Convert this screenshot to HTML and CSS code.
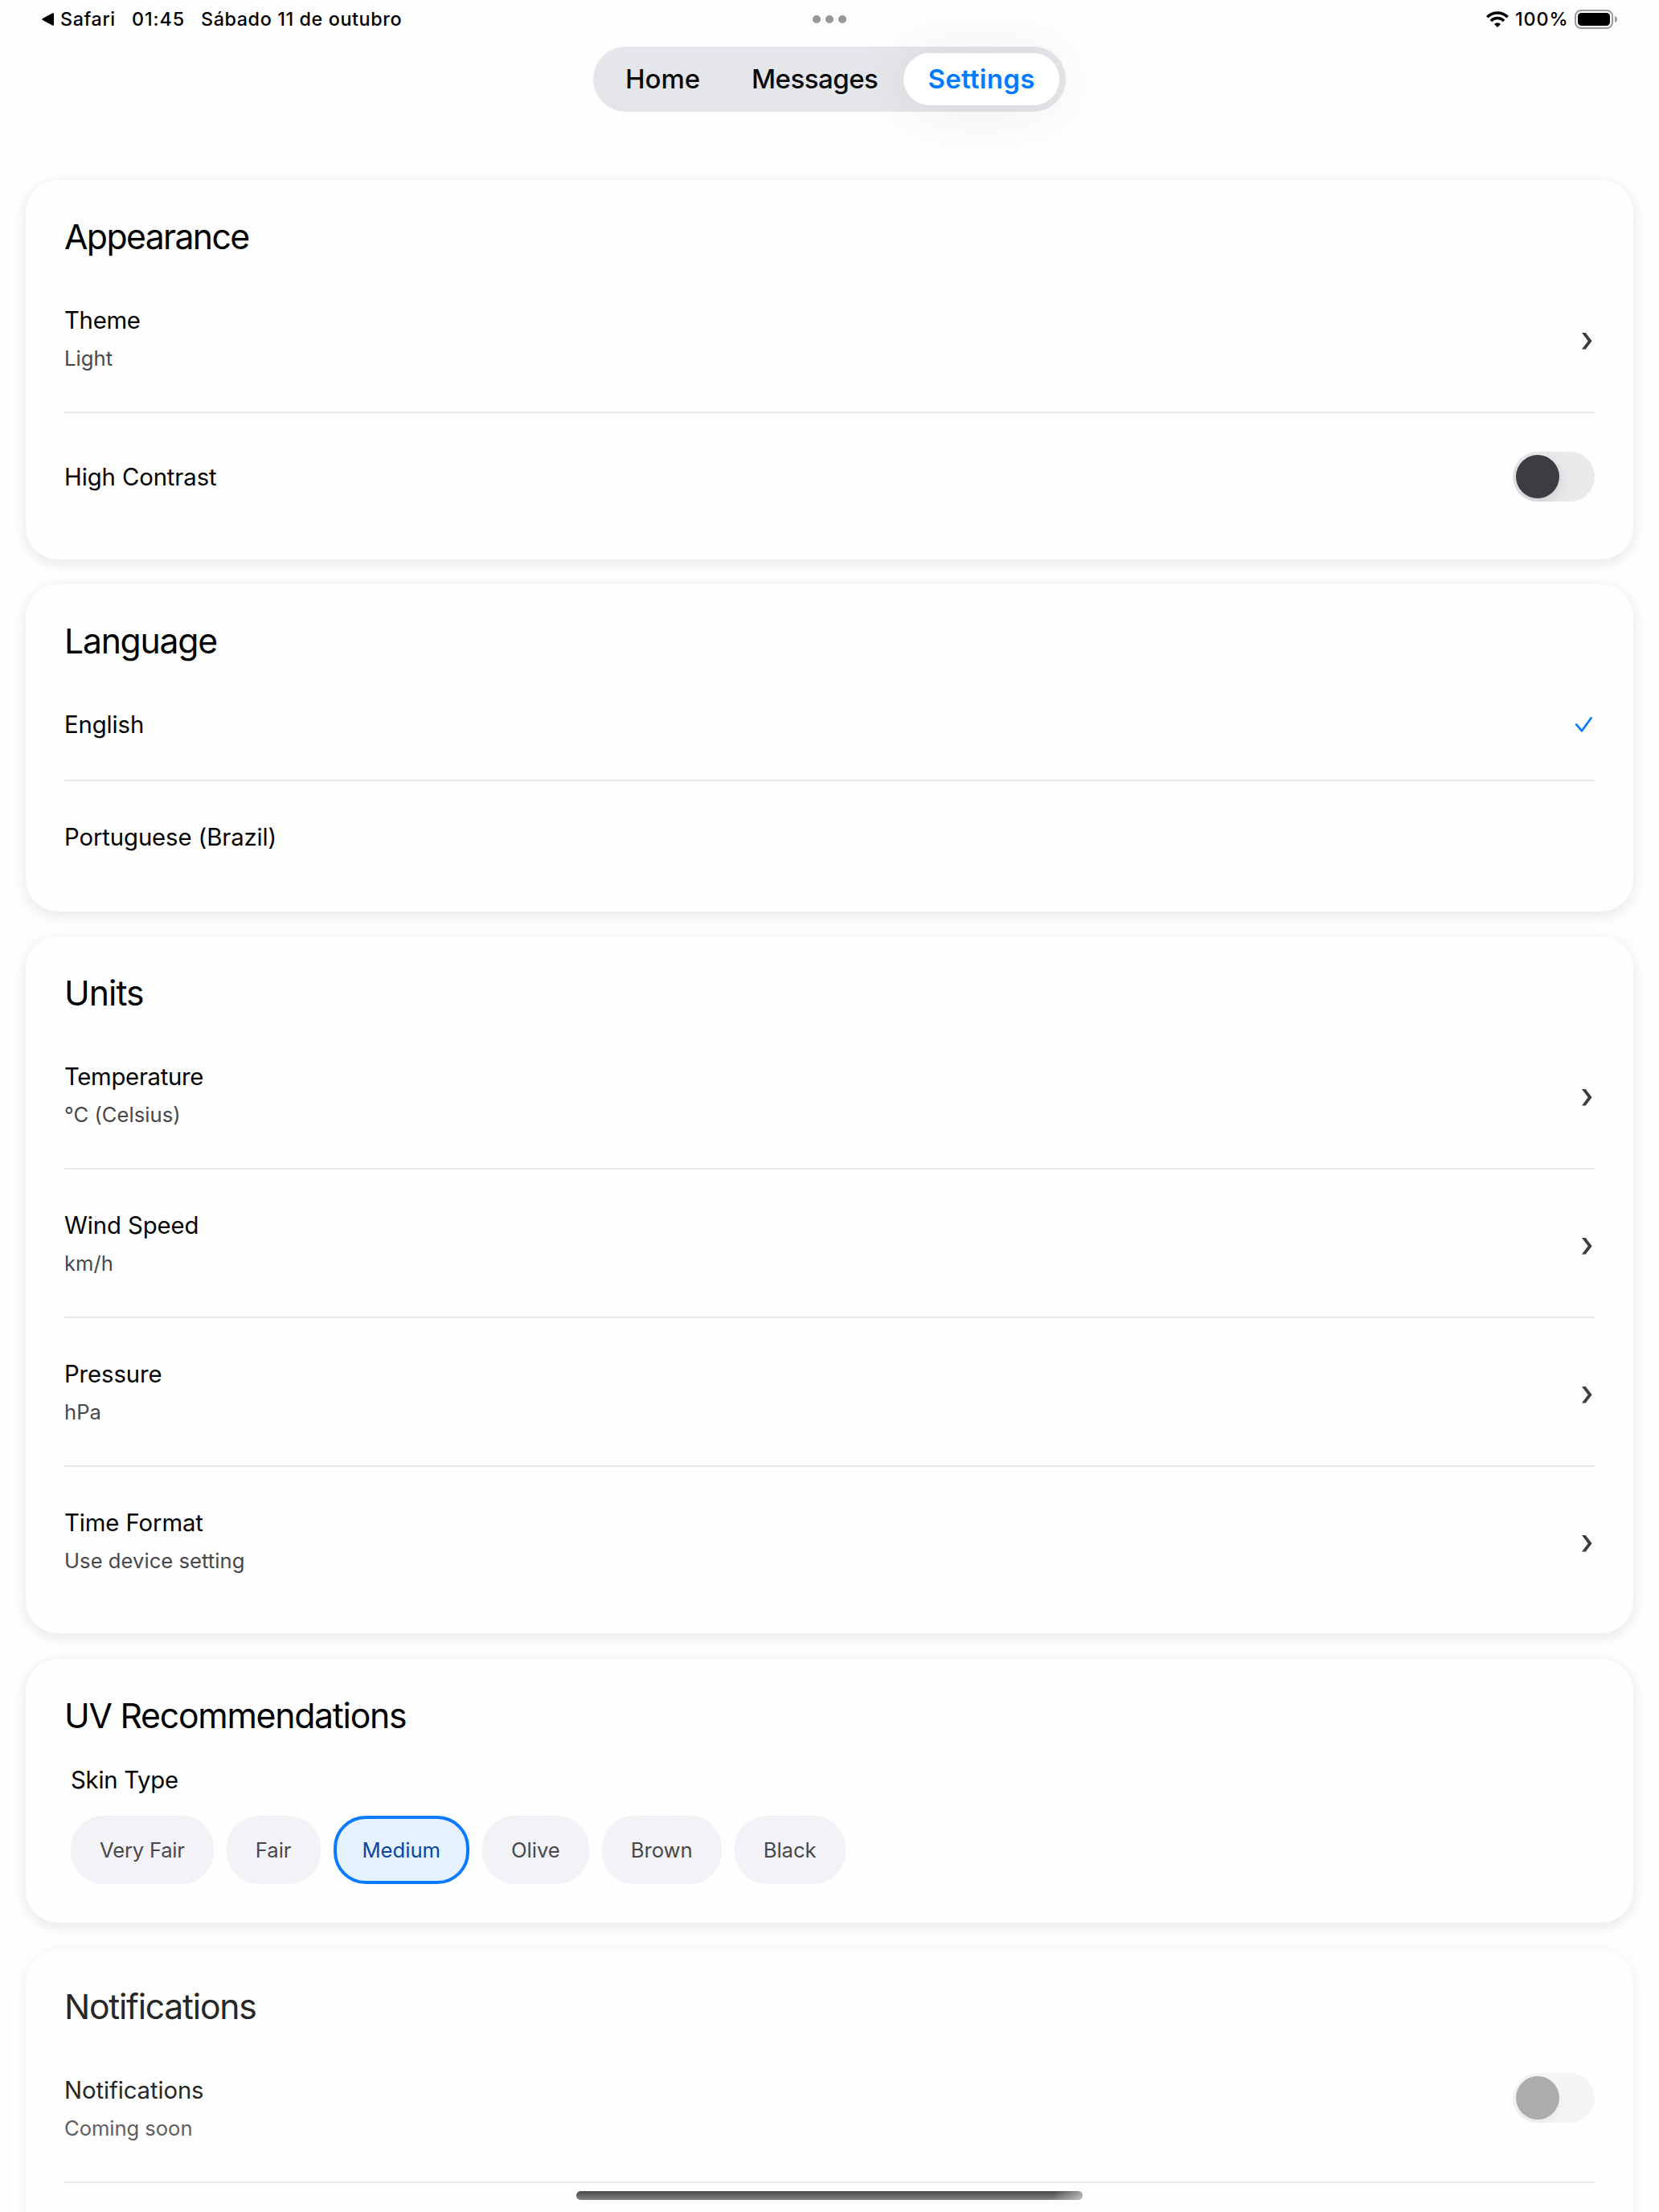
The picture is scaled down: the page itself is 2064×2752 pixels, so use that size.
FILE: index.html
```html
<!DOCTYPE html>
<html lang="en">
<head>
<meta charset="utf-8">
<title>Settings</title>
<link rel="stylesheet" href="styles.css">
</head>
<body>
<header class="top">
  <div class="status">
    <div class="status-left">
      <svg class="back" width="15" height="16" viewBox="0 0 15 16"><path d="M1 7.1 13 .4Q15 -.3 15 1.600V14.400Q15 16.300 13 15.600L1 8.900Q-.5 8 1 7.100Z"/></svg>
      <span class="app">Safari</span>
      <span class="time">01:45</span>
      <span class="date">Sábado 11 de outubro</span>
    </div>
    <div class="dots"><i></i><i></i><i></i></div>
    <div class="status-right">
      <svg class="wifi" width="28" height="20" viewBox="0 0 28 20">
        <g fill="none" stroke="#000" stroke-width="3.500">
          <path d="M1.300 7.200A18 18 0 0 1 26.700 7.200"/>
          <path d="M5.900 11.900A11.500 11.500 0 0 1 22.100 11.900"/>
        </g>
        <path d="M14 20 10 15.900A5.700 5.700 0 0 1 18 15.900Z"/>
      </svg>
      <span class="pct">100%</span>
      <svg class="battery" width="54" height="24" viewBox="0 0 54 24">
        <rect x="1" y="1" width="46" height="22" rx="7" fill="none" stroke="#9a9a9a" stroke-width="2"/>
        <rect x="4" y="4" width="40" height="16" rx="4.500"/>
        <path d="M50 8Q53 9 53 12T50 16Z" fill="#9a9a9a"/>
      </svg>
    </div>
  </div>
  <nav class="tabs">
    <a class="tab home">Home</a>
    <a class="tab messages">Messages</a>
    <a class="tab active">Settings</a>
  </nav>
</header>

<main class="content">
  <section class="card">
    <h2 class="narrow">Appearance</h2>
    <div class="row">
      <div><div class="label tight">Theme</div><div class="sub">Light</div></div>
      <svg class="chevron" viewBox="0 0 13 21"><path d="M0 0H4.700L12.600 10.300 4.700 20.600H0L7.700 10.300Z"/></svg>
    </div>
    <div class="row">
      <div class="label">High Contrast</div>
      <div class="toggle"><i></i></div>
    </div>
  </section>

  <section class="card">
    <h2>Language</h2>
    <div class="row">
      <div class="label">English</div>
      <svg class="check" viewBox="0 0 21 21"><path d="M1.200 9.300 8 17.300 19.600 1.300"/></svg>
    </div>
    <div class="row">
      <div class="label">Portuguese (Brazil)</div>
    </div>
  </section>

  <section class="card">
    <h2 class="loose">Units</h2>
    <div class="row">
      <div><div class="label tight">Temperature</div><div class="sub">°C (Celsius)</div></div>
      <svg class="chevron" viewBox="0 0 13 21"><path d="M0 0H4.700L12.600 10.300 4.700 20.600H0L7.700 10.300Z"/></svg>
    </div>
    <div class="row">
      <div><div class="label">Wind Speed</div><div class="sub">km/h</div></div>
      <svg class="chevron" viewBox="0 0 13 21"><path d="M0 0H4.700L12.600 10.300 4.700 20.600H0L7.700 10.300Z"/></svg>
    </div>
    <div class="row">
      <div><div class="label">Pressure</div><div class="sub">hPa</div></div>
      <svg class="chevron" viewBox="0 0 13 21"><path d="M0 0H4.700L12.600 10.300 4.700 20.600H0L7.700 10.300Z"/></svg>
    </div>
    <div class="row">
      <div><div class="label">Time Format</div><div class="sub">Use device setting</div></div>
      <svg class="chevron" viewBox="0 0 13 21"><path d="M0 0H4.700L12.600 10.300 4.700 20.600H0L7.700 10.300Z"/></svg>
    </div>
  </section>

  <section class="card uv">
    <h2>UV Recommendations</h2>
    <div class="label skin">Skin Type</div>
    <div class="chips">
      <span class="chip wide">Very Fair</span>
      <span class="chip">Fair</span>
      <span class="chip selected">Medium</span>
      <span class="chip">Olive</span>
      <span class="chip">Brown</span>
      <span class="chip">Black</span>
    </div>
  </section>

  <section class="card muted">
    <h2>Notifications</h2>
    <div class="row">
      <div><div class="label">Notifications</div><div class="sub">Coming soon</div></div>
      <div class="toggle"><i></i></div>
    </div>
    <div class="row"></div>
  </section>
</main>
<div class="home-indicator"></div>
</body>
</html>
```
FILE: styles.css
```css
* { box-sizing: border-box; }
html { height: 2752px; overflow: hidden; }
body {
  margin: 0;
  width: 2064px;
  height: 2752px;
  overflow: hidden;
  background: #fefefe;
  color: #000;
  font-family: Inter, "Liberation Sans", sans-serif;
  font-kerning: normal;
}
svg { display: block; flex: none; }

/* Status bar and tab bar */
.top { height: 224px; }
.status {
  height: 58px;
  padding: 0 52px;
  display: grid;
  grid-template-columns: 1fr auto 1fr;
  font-size: 23.3px;
  font-weight: 500;
  line-height: 28px;
  letter-spacing: .62px;
}
.status-left { display: flex; align-items: flex-start; padding-top: 10px; }
.back { margin-top: 6px; }
.app { margin-left: 8px; width: 89px; }
.time { width: 86px; letter-spacing: .9px; }
.dots { display: flex; gap: 6px; padding-top: 19px; }
.dots i { width: 10px; height: 10px; border-radius: 50%; background: #999; }
.status-right { display: flex; justify-content: flex-end; padding-top: 10px; }
.wifi { margin-top: 4px; margin-right: 8px; }
.pct { width: 74px; letter-spacing: .9px; }
.battery { margin-top: 2px; margin-right: -1px; }

.tabs {
  width: 588px;
  height: 81px;
  margin: 0 auto;
  padding: 8px 8px 8px 40px;
  display: flex;
  align-items: center;
  border-radius: 41px;
  background: #e5e6ea;
  font-size: 33px;
  font-weight: 500;
  line-height: 65px;
}
.tab { color: #0a0a0a; height: 65px; }
.home { width: 157px; letter-spacing: 0; }
.messages { width: 189px; letter-spacing: -.5px; }
.active {
  width: 194px;
  border-radius: 33px;
  background: #fff;
  box-shadow: 0 4px 80px rgba(0, 0, 0, .08);
  color: #007aff;
  font-weight: 600;
  letter-spacing: .3px;
  text-align: center;
}

/* Cards */
.content { padding: 0 32px; display: flex; flex-direction: column; gap: 31px; }
.card {
  flex: none;
  padding: 41px 48px 24px;
  border-radius: 40px;
  background: #fefefe;
  box-shadow: 0 4px 18px rgba(0, 0, 0, .1);
}
h2 {
  margin: 0 0 5px;
  font-size: 42.7px;
  font-weight: 400;
  line-height: 60px;
  letter-spacing: -1.24px;
}
.narrow { letter-spacing: -1.6px; }
.loose { letter-spacing: -.97px; }
.row {
  display: flex;
  justify-content: space-between;
  align-items: flex-start;
  padding: 48px 0;
}
h2 + .row { padding-top: 47px; }
.row + .row { border-top: 2px solid #e5e5ea; }
.label {
  padding-top: 1px;
  font-size: 29.3px;
  line-height: 42px;
  letter-spacing: -.1px;
}
.tight { letter-spacing: -.3px; }
.label:not(:last-child) { margin-bottom: -1px; }
.row > .label { margin-bottom: -1px; }
.sub {
  margin-top: 9px;
  color: #48484a;
  font-size: 25.6px;
  line-height: 36px;
  letter-spacing: .04px;
}
.chevron { width: 13px; height: 21px; margin: 37px 3px 0 0; fill: #3c3c43; }
.check {
  width: 21px;
  height: 21px;
  margin: 12px 3px 0 0;
  fill: none;
  stroke: #007aff;
  stroke-width: 2.6;
  stroke-linecap: round;
  stroke-linejoin: round;
}
.toggle {
  width: 102px;
  height: 62px;
  padding: 4px;
  border-radius: 31px;
  overflow: hidden;
  background: #e9e9eb;
}
.toggle i {
  display: block;
  width: 54px;
  height: 54px;
  border-radius: 50%;
  background: #3c3c43;
  box-shadow: 0 6px 16px rgba(0, 0, 0, .12);
}
.row:has(.toggle) > .label { padding: 11px 0 0; }

/* Skin type chips */
.uv { margin-top: 1px; padding-bottom: 48px; }
.uv .skin { margin: 28px 8px 0; letter-spacing: -.25px; }
.chips { display: flex; gap: 16px; margin: 23px 8px 0; }
.chip {
  height: 85px;
  padding: 0 36px;
  border-radius: 40px;
  background: #f2f2f7;
  color: #48484a;
  font-size: 25.6px;
  line-height: 85px;
}
.wide { letter-spacing: -.2px; }
.selected {
  padding: 0 32px;
  border: 4px solid #0a7aff;
  background: #e5f1ff;
  color: #0a459e;
  line-height: 77px;
}

.muted { margin-top: 3px; box-shadow: 0 4px 18px rgba(0, 0, 0, .07); }
.muted h2, .muted .label { color: #272727; }
.muted .sub { color: #5f5f64; letter-spacing: -.05px; }
.muted .row + .row { border-color: #e9e9ee; height: 140px; }
.muted .toggle { background: #f5f5f5; }
.muted .toggle i { background: #acacae; box-shadow: 0 6px 16px rgba(0, 0, 0, .05); }

.home-indicator {
  position: absolute;
  left: 717px;
  top: 2726px;
  width: 630px;
  height: 11px;
  border-radius: 6px;
  background: linear-gradient(100deg, transparent 94%, rgba(255, 255, 255, .5)), linear-gradient(#484848, #828282);
}
```
